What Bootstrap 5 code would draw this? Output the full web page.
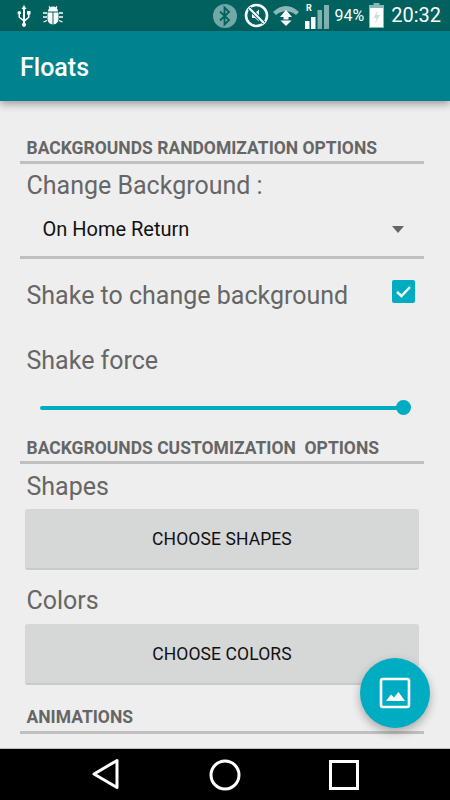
<!DOCTYPE html>
<html lang="en">
<head>
<meta charset="utf-8">
<title>Floats</title>
<link href="https://cdn.jsdelivr.net/npm/bootstrap@5.3.0/dist/css/bootstrap.min.css" rel="stylesheet">
<style>
html,body{width:450px;height:800px;margin:0;overflow:hidden;}
body{font-family:Roboto,"Liberation Sans",sans-serif;background:#eee;}
.phone{width:450px;height:800px;position:relative;}
.statusbar{height:31px;background:#00615f;color:#fff;padding:0 9px 0 17px;}
.statusbar .clock{font-size:20px;line-height:31px;margin-left:7px;}
.statusbar .pct{font-size:16px;line-height:31px;margin-left:4px;}
.bug{margin-left:11px;}
.st-a{margin-left:6px;}
.st-b{margin-left:3px;}
.st-c{margin-left:5px;}
.toolbar{height:70px;background:#00838f;color:#fff;padding:4px 20px 0;font-size:25px;font-weight:500;box-shadow:0 3px 8px rgba(0,0,0,.35);position:relative;z-index:2;}
.content{height:647px;overflow:hidden;padding:37px 26px 0 20px;color:#666;}
.sechead{font-size:17.5px;font-weight:700;line-height:20px;padding-left:6.5px;padding-bottom:3px;border-bottom:3px solid #c0c0c0;white-space:nowrap;}
.lbl{font-size:25px;line-height:26px;padding:2px 0 0 6.5px;}
.spin{height:60px;padding:3px 20px 0 22.5px;border-bottom:3px solid #c0c0c0;color:#111;font-size:20px;}
.caret-tri{width:0;height:0;border-left:6px solid transparent;border-right:6px solid transparent;border-top:7px solid #666;}
.chk{width:23px;height:23px;border-radius:2px;background:#00acc1;margin-right:9px;margin-top:-8px;}
.sliderrow{height:4px;margin:32px 20px 0 20px;background:#00acc1;border-radius:2px;position:relative;}
.thumb{position:absolute;right:-7px;top:-6px;width:15px;height:15px;border-radius:50%;background:#00acc1;}
.mybtn{display:block;width:394px;height:61px;margin-left:5px;background:#d6d7d7;border:0;border-bottom:2px solid #c9caca;border-radius:3px;color:#111;font-size:17.5px;font-weight:400;letter-spacing:.1px;line-height:60px;padding:0;text-align:center;}
.fab{position:absolute;left:360px;top:658px;width:70px;height:70px;border-radius:50%;background:#00acc1;box-shadow:0 4px 10px rgba(0,0,0,.3);z-index:3;}
.navbar-sys{height:52px;background:#000;border-top:1px solid #bdbdbd;padding:0;position:relative;}
.navslot{position:absolute;}
.m-chg{margin-top:7px;}
.m-row{margin-top:18px;height:36px;}
.m-force{margin-top:33px;}
.m-head2{margin-top:28px;padding-bottom:3px;}
.m-shapes{margin-top:8px;}
.m-btn1{margin-top:9px;}
.m-colors{margin-top:16px;}
.m-btn2{margin-top:10px;}
.m-head3{margin-top:22px;padding-bottom:4px;}
</style>
</head>
<body>
<div class="phone d-flex flex-column">
  <div class="statusbar d-flex align-items-center">
    <svg width="14" height="22" viewBox="0 0 14 22"><path d="M7 0 9.500 4H8v10.500l3-2.500V9.500H10V6h3.500v3.500h-1v3L8 16.500V18a2 2 0 1 1-2 0v-2L1.500 12.500V9.300a1.700 1.700 0 1 1 1.500 0V12l3 2.300V4H4.500Z" fill="#fff"/></svg>
    <svg class="bug" width="22" height="22" viewBox="0 0 22 22" fill="#fff"><path d="M6 6.500a5 5 0 0 1 10 0Z"/><path d="M5.500 7.500h5v12a5.500 5.500 0 0 1-5-5.500Zm6 0h5V14a5.500 5.500 0 0 1-5 5.500Z"/><path d="M7 1.500 8.500 3.500M15 1.500 13.500 3.500M1 8h4M17 8h4M1 12h4M17 12h4M1.500 17 5 15.500M20.500 17 17 15.500" stroke="#fff" stroke-width="1.300"/></svg>
    <div class="ms-auto d-flex align-items-center">
      <svg width="26" height="26" viewBox="0 0 26 26"><circle cx="13" cy="13" r="12" fill="#fff" opacity=".45"/><path d="M8 8.500 17 17l-4.500 4.500v-17L17 9l-9 8.500" fill="none" stroke="#00615f" stroke-width="1.800"/></svg>
      <svg class="st-a" width="25" height="25" viewBox="0 0 25 25"><circle cx="12.500" cy="12.500" r="10.500" fill="none" stroke="#fff" stroke-width="2.600"/><path d="M8 10h3l4-3.500v12L11 15H8Z" fill="#fff"/><path d="M5 5l15 15" stroke="#00615f" stroke-width="4"/><path d="M5 5l15 15" stroke="#fff" stroke-width="2"/></svg>
      <svg class="st-b" width="28" height="24" viewBox="0 0 28 24"><path d="M1 8C9 0 19 0 27 8L24 11C18 6 10 6 4 11Z" fill="#fff" opacity=".55"/><path d="M14 6 20 13H16.500V15.500H11.500V13H8Z" fill="#fff"/><path d="M8.500 16.500h11L14 22Z" fill="#fff"/></svg>
      <svg class="st-c" width="25" height="27" viewBox="0 0 25 27"><text x="1" y="9" font-size="9" font-weight="700" fill="#fff" font-family="Roboto">R</text><path d="M0 19h4.500v8H0Z" fill="#fff"/><path d="M6 15h4.500v12H6Z" fill="#fff"/><path d="M12.500 8H17v19h-4.500Z" fill="#fff" opacity=".5"/><path d="M19 3h5v24h-5Z" fill="#fff" opacity=".5"/></svg>
      <span class="pct">94%</span>
      <svg class="st-c" width="15" height="25" viewBox="0 0 15 25"><path d="M4.500 0h6v2H15v23H0V2h4.500Z" fill="#fff" opacity=".55"/><path d="M1 5h13v19H1Z" fill="#fff"/><path d="M9 7 4.500 15h3L6 21 11 12H8Z" fill="#cfdcdc"/></svg>
      <span class="clock">20:32</span>
    </div>
  </div>
  <div class="toolbar d-flex align-items-center">Floats</div>
  <div class="content">
    <div class="sechead">BACKGROUNDS RANDOMIZATION OPTIONS</div>
    <div class="lbl m-chg">Change Background :</div>
    <div class="spin d-flex align-items-center justify-content-between">On Home Return<span class="caret-tri"></span></div>
    <div class="d-flex align-items-center justify-content-between m-row">
      <div class="lbl">Shake to change background</div>
      <div class="chk d-flex align-items-center justify-content-center"><svg width="19" height="19" viewBox="0 0 19 19"><path d="M3 10l4.500 4L16 5" fill="none" stroke="#fff" stroke-width="2.400"/></svg></div>
    </div>
    <div class="lbl m-force">Shake force</div>
    <div class="sliderrow"><span class="thumb"></span></div>
    <div class="sechead m-head2">BACKGROUNDS CUSTOMIZATION&nbsp; OPTIONS</div>
    <div class="lbl m-shapes">Shapes</div>
    <button class="mybtn m-btn1">CHOOSE SHAPES</button>
    <div class="lbl m-colors">Colors</div>
    <button class="mybtn m-btn2">CHOOSE COLORS</button>
    <div class="sechead m-head3">ANIMATIONS</div>
  </div>
  <div class="fab d-flex align-items-center justify-content-center">
    <svg width="32" height="32" viewBox="0 0 32 32"><rect x="2" y="2" width="28" height="28" rx="2" fill="none" stroke="#fff" stroke-width="2.600"/><path d="M7 24 12 17.500 15 20.500 19.500 15 26 24Z" fill="#fff"/></svg>
  </div>
  <div class="navbar-sys">
    <svg class="navslot" style="left:92px;top:9px" width="28" height="32" viewBox="0 0 28 32"><path d="M2 16 25 2.500V29.500Z" fill="none" stroke="#fff" stroke-width="3" stroke-linejoin="round"/></svg>
    <svg class="navslot" style="left:209px;top:10px" width="32" height="32" viewBox="0 0 32 32"><circle cx="16" cy="16" r="14" fill="none" stroke="#fff" stroke-width="3"/></svg>
    <svg class="navslot" style="left:328px;top:10px" width="32" height="32" viewBox="0 0 32 32"><rect x="2.500" y="2.500" width="27" height="27" fill="none" stroke="#fff" stroke-width="3"/></svg>
  </div>
</div>
</body>
</html>
